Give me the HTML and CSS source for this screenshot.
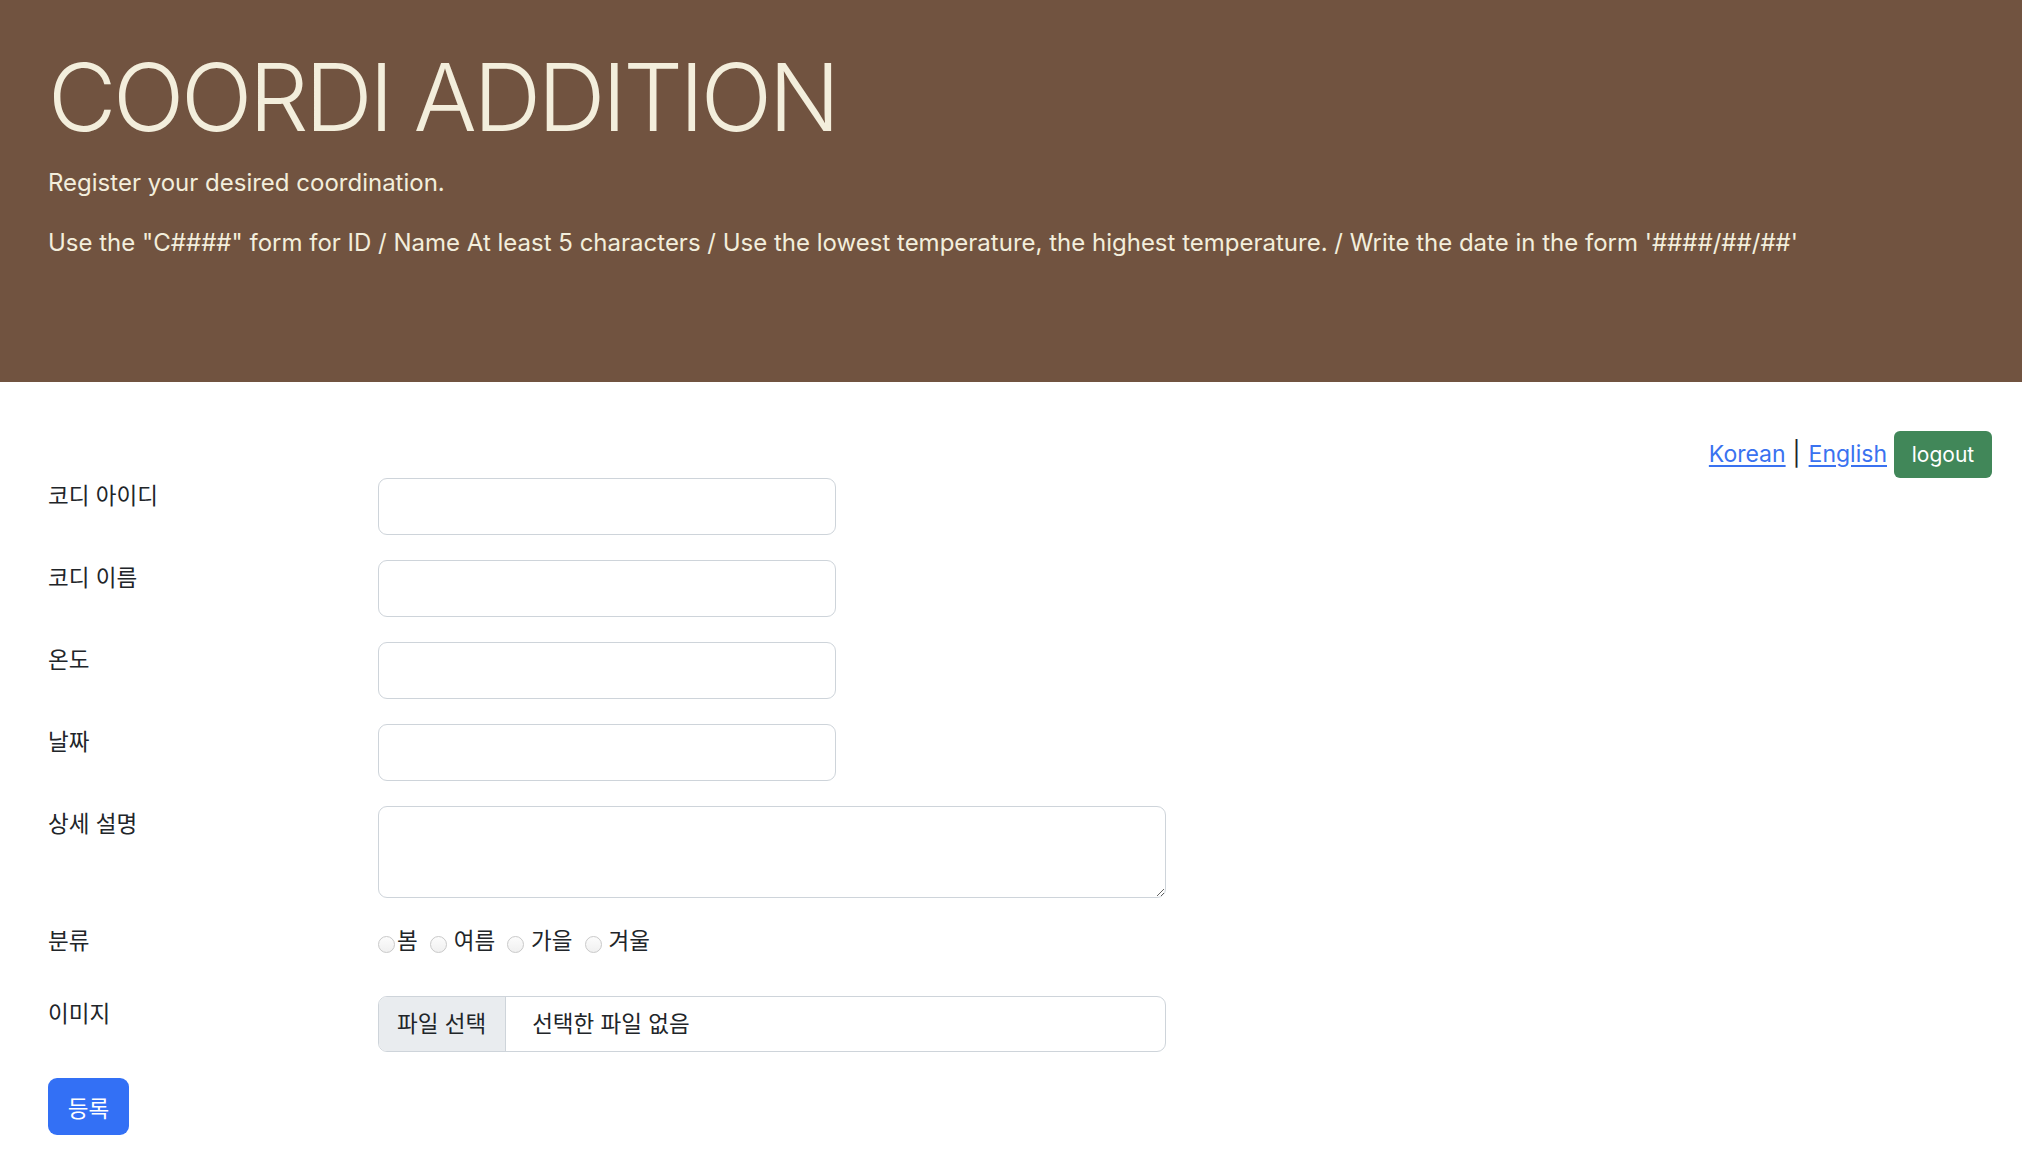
FILE: index.html
```html
<!DOCTYPE html>
<html lang="ko">
<head>
<meta charset="utf-8">
<title>COORDI ADDITION</title>
<link rel="stylesheet" href="styles.css">
</head>
<body>
<header class="hero">
  <h1 class="hero-title">COORDI ADDITION</h1>
  <p class="hero-text">Register your desired coordination.</p>
  <p class="hero-text">Use the "C####" form for ID / Name At least 5 characters / Use the lowest temperature, the highest temperature. / Write the date in the form '####/##/##'</p>
</header>
<main class="main">
  <div class="topbar">
    <a class="lang" href="#">Korean</a><span class="sep">|</span><a class="lang" href="#">English</a>
    <button class="btn-logout" type="button">logout</button>
  </div>
  <form class="form">
    <div class="row">
      <label class="label ko">코디 아이디</label>
      <input class="field short" type="text">
    </div>
    <div class="row">
      <label class="label ko">코디 이름</label>
      <input class="field short" type="text">
    </div>
    <div class="row">
      <label class="label ko">온도</label>
      <input class="field short" type="text">
    </div>
    <div class="row">
      <label class="label ko">날짜</label>
      <input class="field short" type="text">
    </div>
    <div class="row">
      <label class="label ko">상세 설명</label>
      <textarea class="field long area"></textarea>
    </div>
    <div class="row row-radio">
      <label class="label ko">분류</label>
      <div class="radios ko">
        <span class="radio r1"></span><span class="rtext t1">봄</span>
        <span class="radio r2"></span><span class="rtext t2">여름</span>
        <span class="radio r2"></span><span class="rtext t2">가을</span>
        <span class="radio r2"></span><span class="rtext t3">겨울</span>
      </div>
    </div>
    <div class="row">
      <label class="label ko">이미지</label>
      <div class="file long">
        <span class="file-btn ko">파일 선택</span>
        <span class="file-name ko">선택한 파일 없음</span>
      </div>
    </div>
    <button class="btn-submit ko" type="button">등록</button>
  </form>
</main>
</body>
</html>
```
FILE: styles.css
```css
* { box-sizing: border-box; }
html, body { margin: 0; padding: 0; }
body {
  font-family: Inter, "Noto Sans CJK KR", sans-serif;
  font-size: 24px;
  line-height: 1.5;
  color: #212529;
  background: #fff;
}
.ko { font-family: Inter, "Noto Sans CJK KR", sans-serif; font-size: 22.5px; }

.hero {
  background: #715340;
  height: 382px;
  padding: 47px 48px 0;
  color: #f3eedc;
}
.hero-title {
  margin: 0 0 18px;
  font-size: 94px;
  font-weight: 300;
  line-height: 100px;
  letter-spacing: -3.4px;
}
.hero-text { margin: 0 0 24px; }

.main { padding: 48px 30px 0 48px; }
.topbar {
  display: flex;
  justify-content: flex-end;
  align-items: center;
  height: 48px;
}
.lang { color: #3a72f0; text-decoration: underline; text-underline-offset: 3px; font-size: 23px; }
.sep { margin: 0 8px 0 7px; }
.btn-logout {
  margin-left: 7px;
  height: 47px;
  width: 98px;
  border: 0;
  border-radius: 6px;
  background: #418759;
  color: #fff;
  font-family: Inter, sans-serif;
  font-size: 21px;
}

.form { display: flex; flex-direction: column; }
.row {
  display: grid;
  grid-template-columns: 330px auto;
  align-items: start;
  margin-bottom: 25px;
}
.label { line-height: 36px; }
.field {
  display: block;
  height: 57px;
  border: 1.5px solid #ced4da;
  border-radius: 9px;
  background: #fff;
  font: inherit;
}
.short { width: 458px; }
.long { width: 788px; }
.area { height: 92px; resize: vertical; }

.row-radio { height: 48px; margin-bottom: 25px; }
.radios { display: flex; align-items: flex-start; line-height: 36px; }
.radio {
  width: 17px; height: 17px;
  margin-top: 13px;
  border: 1px solid #c9c9c9;
  border-radius: 50%;
  background: linear-gradient(#fcfcfc, #f0f0f0);
  flex: none;
}
.r2 { margin-left: 12px; }
.rtext { margin-left: 2px; }
.t2, .t3 { margin-left: 7px; }

.file {
  display: flex;
  align-items: center;
  height: 56px;
  border: 1.5px solid #ced4da;
  border-radius: 9px;
  overflow: hidden;
}
.file-btn {
  height: 100%;
  display: flex;
  align-items: center;
  padding: 0 19px 0 18px;
  background: #e9ecef;
  border-right: 1.5px solid #ced4da;
}
.file-name { padding-left: 26px; }

.btn-submit {
  width: 81px;
  height: 57px;
  margin-top: 1px;
  border: 0;
  border-radius: 9px;
  background: #3370f5;
  color: #fff;
}
```
